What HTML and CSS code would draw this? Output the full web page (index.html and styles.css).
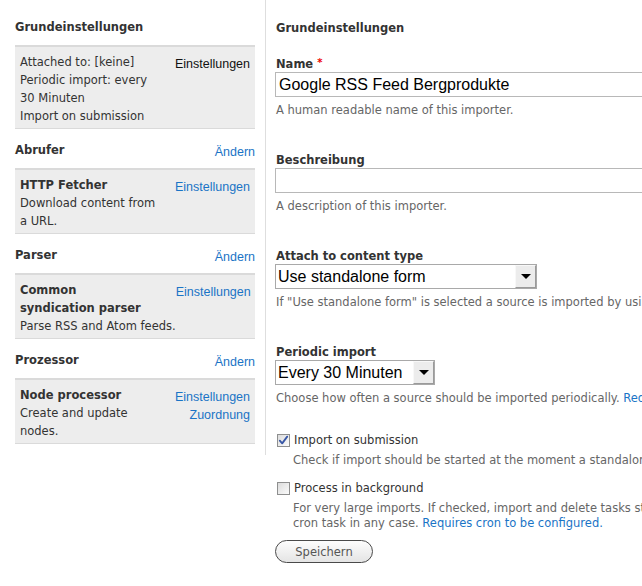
FILE: index.html
```html
<!DOCTYPE html>
<html lang="de">
<head>
<meta charset="utf-8">
<title>Importer</title>
<link rel="stylesheet" href="styles.css">
</head>
<body>
<div class="page">
  <aside class="sidebar">
    <h2 class="side-title side-title--first">Grundeinstellungen</h2>
    <div class="plugin">
      <div class="plugin-text">Attached to: [keine]<br>Periodic import: every<br>30 Minuten<br>Import on submission</div>
      <div class="plugin-links"><a class="link-plain" href="#">Einstellungen</a></div>
    </div>

    <div class="side-head"><h2 class="side-title">Abrufer</h2><a class="link-side link-head" href="#">Ändern</a></div>
    <div class="plugin">
      <div class="plugin-text"><strong>HTTP Fetcher</strong><br>Download content from<br>a URL.</div>
      <div class="plugin-links"><a class="link-side" href="#">Einstellungen</a></div>
    </div>

    <div class="side-head"><h2 class="side-title">Parser</h2><a class="link-side link-head" href="#">Ändern</a></div>
    <div class="plugin">
      <div class="plugin-text"><strong>Common<br>syndication parser</strong><br>Parse RSS and Atom feeds.</div>
      <div class="plugin-links"><a class="link-side" href="#">Einstellungen</a></div>
    </div>

    <div class="side-head"><h2 class="side-title">Prozessor</h2><a class="link-side link-head" href="#">Ändern</a></div>
    <div class="plugin">
      <div class="plugin-text"><strong>Node processor</strong><br>Create and update<br>nodes.</div>
      <div class="plugin-links"><a class="link-side" href="#">Einstellungen</a><a class="link-side" href="#">Zuordnung</a></div>
    </div>
  </aside>

  <main class="main">
    <h2 class="main-title">Grundeinstellungen</h2>

    <div class="form-item">
      <label class="label">Name <span class="req">*</span></label>
      <input class="text-input" type="text" value="Google RSS Feed Bergprodukte">
      <div class="desc">A human readable name of this importer.</div>
    </div>

    <div class="form-item">
      <label class="label">Beschreibung</label>
      <input class="text-input" type="text" value="">
      <div class="desc">A description of this importer.</div>
    </div>

    <div class="form-item">
      <label class="label">Attach to content type</label>
      <div class="select select--wide"><span class="select-value">Use standalone form</span><span class="select-btn"><span class="arrow"></span></span></div>
      <div class="desc">If "Use standalone form" is selected a source is imported by using a form under /import. If a content type is selected a source is imported by creating a node of that content type.</div>
    </div>

    <div class="form-item form-item--tight">
      <label class="label">Periodic import</label>
      <div class="select select--narrow"><span class="select-value">Every 30 Minuten</span><span class="select-btn"><span class="arrow"></span></span></div>
      <div class="desc">Choose how often a source should be imported periodically. <a class="link-desc" href="#">Requires cron to be configured.</a></div>
    </div>

    <div class="check-item">
      <div class="check-row"><span class="checkbox"><svg width="11" height="11" viewBox="0 0 11 11"><path d="M1.8 5.6 L4.2 8.4 L9.2 1.6" fill="none" stroke="#3857a6" stroke-width="1.8" stroke-linecap="round" stroke-linejoin="round"/></svg></span><span class="check-label">Import on submission</span></div>
      <div class="desc desc--check">Check if import should be started at the moment a standalone form or node form is submitted.</div>
    </div>

    <div class="check-item check-item--last">
      <div class="check-row"><span class="checkbox"></span><span class="check-label">Process in background</span></div>
      <div class="desc desc--check">For very large imports. If checked, import and delete tasks started from the web UI will be handled by a cron task in the background rather than by the browser. This does not affect periodic imports, they are handled by a<br>cron task in any case. <a class="link-desc" href="#">Requires cron to be configured.</a></div>
    </div>

    <button class="button" type="button">Speichern</button>
  </main>
</div>
</body>
</html>
```

FILE: styles.css
```css
html, body {
  margin: 0;
  padding: 0;
  overflow: hidden;
  background: #fff;
}

body {
  font-family: "DejaVu Sans", Verdana, sans-serif;
  font-size: 11.5px;
  color: #333;
}

.page {
  display: flex;
  align-items: flex-start;
  width: 642px;
  overflow: hidden;
}

/* Sidebar */
.sidebar {
  flex: none;
  width: 240px;
  padding: 18px 10px 11px 15px;
  border-right: 1px solid #dedede;
}

.side-title {
  margin: 0;
  font-size: 11.5px;
  font-weight: bold;
  line-height: 18px;
  color: #333;
}

.side-title--first {
  margin-bottom: 9px;
}

.side-head {
  display: flex;
  justify-content: space-between;
  align-items: flex-start;
  margin: 12px 0 5px;
}

.plugin {
  display: flex;
  justify-content: space-between;
  align-items: flex-start;
  background: #ededed;
  border-top: 2px solid #dadada;
  border-bottom: 1px solid #dadada;
  padding: 6px 5px 3px 5px;
  line-height: 18px;
}

.plugin-text {
  white-space: nowrap;
}

.plugin-text strong {
  font-weight: bold;
}

.plugin-links {
  display: flex;
  flex-direction: column;
  align-items: flex-end;
  padding-top: 2px;
}

.link-plain,
.link-side {
  font-family: "Liberation Sans", Arial, sans-serif;
  font-size: 12.5px;
  line-height: 18px;
  text-decoration: none;
}

.link-plain {
  color: #111;
}

.link-side {
  color: #1a74c6;
}

.link-side.link-head {
  line-height: 22px;
}

/* Main */
.main {
  flex: none;
  width: 900px;
  padding: 19px 0 0 9px;
}

.main-title {
  margin: 0 0 0 1px;
  font-size: 11.5px;
  font-weight: bold;
  line-height: 18px;
  color: #333;
}

.form-item {
  margin-top: 18px;
  margin-bottom: 33px;
}

.form-item + .form-item {
  margin-top: 0;
}

.form-item--tight {
  margin-bottom: 25px;
}

.label {
  display: block;
  margin-left: 1px;
  padding-top: 2px;
  font-weight: bold;
  line-height: 15px;
  color: #333;
}

.req {
  color: #e00;
  font-size: 10px;
  vertical-align: top;
  line-height: 12px;
}

.text-input {
  display: block;
  box-sizing: border-box;
  width: 600px;
  height: 25px;
  margin: 0;
  padding: 0 3px;
  border: 1px solid #b8b8b8;
  font-family: "Liberation Sans", Arial, sans-serif;
  font-size: 16px;
  color: #000;
  background: #fff;
  outline: none;
}

.desc {
  margin-top: 6px;
  margin-left: 1px;
  font-size: 11.5px;
  line-height: 15px;
  color: #666;
  white-space: nowrap;
}

.link-desc {
  color: #1a74c6;
  text-decoration: none;
}

.select {
  display: flex;
  box-sizing: border-box;
  height: 25px;
  border: 1px solid #a9a9a9;
  background: #fff;
}

.select--wide {
  width: 262px;
}

.select--narrow {
  width: 160px;
}

.select-value {
  flex: 1;
  padding-left: 2px;
  font-family: "Liberation Sans", Arial, sans-serif;
  font-size: 16px;
  line-height: 23px;
  color: #000;
  white-space: nowrap;
}

.select-btn {
  flex: none;
  display: flex;
  align-items: center;
  justify-content: center;
  box-sizing: border-box;
  width: 21px;
  height: 23px;
  background: #ececec;
  border-top: 1px solid #f8f8f8;
  border-left: 1px solid #f8f8f8;
  border-right: 1px solid #9a9a9a;
  border-bottom: 1px solid #9a9a9a;
}

.arrow {
  width: 0;
  height: 0;
  border-left: 5px solid transparent;
  border-right: 5px solid transparent;
  border-top: 5px solid #000;
}

.check-item {
  margin-bottom: 11px;
}

.check-item--last {
  margin-bottom: 9px;
}

.check-row {
  display: flex;
  align-items: center;
  line-height: 18px;
}

.checkbox {
  flex: none;
  display: flex;
  align-items: center;
  justify-content: center;
  box-sizing: border-box;
  width: 13px;
  height: 13px;
  margin: 0 4px 0 2px;
  border: 1px solid #8e8f8f;
  background: linear-gradient(135deg, #dcdcdc, #fbfbfb);
}

.check-label {
  font-size: 11.5px;
  color: #333;
}

.desc--check {
  margin-top: 4px;
  padding-left: 17px;
}

.button {
  display: block;
  box-sizing: border-box;
  width: 98px;
  height: 23px;
  margin: 0;
  padding: 0;
  border: 1px solid #4a4a4a;
  border-radius: 12px;
  background: linear-gradient(#fdfdfd, #e4e4e4);
  font-family: "DejaVu Sans", Verdana, sans-serif;
  font-size: 11.5px;
  color: #555;
}
```
